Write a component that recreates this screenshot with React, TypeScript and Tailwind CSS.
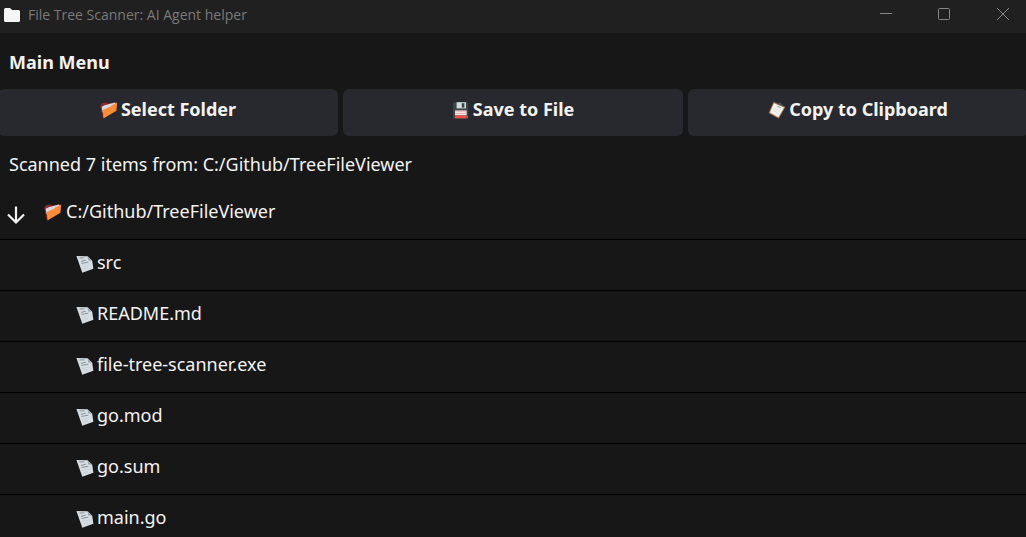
import { useState } from 'react';
import type { ReactNode } from 'react';

const files = ['src', 'README.md', 'file-tree-scanner.exe', 'go.mod', 'go.sum', 'main.go'];

function FolderIcon() {
  return (
    <svg viewBox="0 0 18 18" className="mt-0.5 size-[18px] shrink-0" aria-hidden="true">
      <path d="M0.5 4.2 2 2.3 6.8 1.6 7.6 2.4 15 1.2 14 8 2 11Z" fill="#8e2a2c" />
      <path d="M1.4 6 4.5 4.2 15.3 1.4 15.8 3.5 5 9.5 2.5 12Z" fill="#d5dbe0" />
      <path d="M1 5.2 2 7.8 3.2 16 2.5 15.6 0.4 5Z" fill="#8e2a2c" />
      <path d="M2.8 9 10.5 5.6 11.2 4.4 17.2 1.6 16.4 9.8 3.4 17.6Z" fill="#ff8c35" />
    </svg>
  );
}

function FileIcon() {
  return (
    <svg viewBox="0 0 18 18" className="mt-1 size-[18px] shrink-0" aria-hidden="true">
      <path d="M0.4 1 11.6 1.2 16.2 5.8 17.4 13.8 6.3 17.8Z" fill="#d5dde2" />
      <path d="M11.6 1.2 16.2 5.8 12.2 5.4Z" fill="#9aa8b0" />
      <path d="M3.4 3 8.4 2.8M5 6.4 9.8 5.2M5.4 8.4 12.4 7.2" stroke="#74818a" strokeWidth="0.8" fill="none" />
      <path d="M6.2 11.6 13.6 10M6.8 14 12 12.8" stroke="#c0cbd1" strokeWidth="0.6" fill="none" />
    </svg>
  );
}

function SaveIcon() {
  return (
    <svg viewBox="0 0 18 18" className="mt-0.5 size-[18px] shrink-0" aria-hidden="true">
      <path d="M1 2.2 2 1.2H15.2L16.2 2.2V17.4H1Z" fill="#37474b" />
      <path d="M4.6 1.2H14V7.4H4.6Z" fill="#d3dadd" />
      <path d="M9.8 2.2H12.4V6.6H9.8Z" fill="#37474b" />
      <path d="M3 9.6H14.6V14.4H3Z" fill="#f4e4e2" />
      <path d="M3 9.6H14.6V10.6H3ZM3 12H14.6V12.7H3Z" fill="#e9a39d" />
      <path d="M3 14.4H14.6V17.4H3Z" fill="#ee5347" />
      <path d="M15 15.4H16V16.4H15Z" fill="#a9b4b8" />
    </svg>
  );
}

function ClipboardIcon() {
  return (
    <svg viewBox="0 0 18 18" className="mt-0.5 size-[18px] shrink-0" aria-hidden="true">
      <path d="M5.6 0.8 17.4 6 10.8 17.6 0.6 12Z" fill="#b77952" />
      <path d="M6 2.2 16 6.6 10.3 16.2 2 11.6Z" fill="#f5f5f2" />
      <path d="M8.8 1.2 10.4 2.2 12 1.6 15.2 4.2 14.6 5.2 8.2 2.6Z" fill="#46535a" />
      <path d="M7.6 5.4 13 8M6.4 7.6 11.8 10.2M5.2 9.6 10.6 12.4" stroke="#c6cfd0" strokeWidth="0.7" fill="none" />
      <path d="M9.6 5.2 12.6 6.7" stroke="#6faa65" strokeWidth="0.8" fill="none" />
    </svg>
  );
}

function ActionButton({ icon, label }: { icon: ReactNode; label: string }) {
  return (
    <button
      type="button"
      className="flex h-[47px] flex-1 items-center justify-center gap-[3px] rounded-md bg-[#28292e] pb-2 font-bold hover:bg-[#323339]"
    >
      {icon}
      <span>{label}</span>
    </button>
  );
}

export default function App() {
  const [open, setOpen] = useState(true);

  return (
    <div className="min-h-screen overflow-x-hidden bg-[#171718] font-['Noto_Sans',sans-serif] text-[18px] leading-6 text-[#f3f3f3]">
      <header className="flex h-[33px] items-start justify-between bg-[#202020] text-[#858585]">
        <div className="flex h-[30px] items-center gap-2 pl-1">
          <svg viewBox="0 0 16 14" className="h-3.5 w-4" aria-hidden="true">
            <path d="M0 1.5Q0 0 1.5 0H6L8 2H14.5Q16 2 16 3.5V12.5Q16 14 14.5 14H1.5Q0 14 0 12.5Z" fill="#f5f5f5" />
          </svg>
          <h1 className="font-['Open_Sans',sans-serif] text-[14px] leading-5 text-[#7a7a7a]">File Tree Scanner: AI Agent helper</h1>
        </div>
        <div className="flex">
          <button type="button" aria-label="Minimize" className="flex h-7 w-[58px] items-center justify-center">
            <svg viewBox="0 0 12 12" className="size-3" aria-hidden="true">
              <path d="M0 5.5H12" stroke="currentColor" />
            </svg>
          </button>
          <button type="button" aria-label="Maximize" className="flex h-7 w-[58px] items-center justify-center">
            <svg viewBox="0 0 12 12" className="size-3" fill="none" aria-hidden="true">
              <rect x="0.5" y="0.5" width="11" height="11" rx="1" stroke="currentColor" />
            </svg>
          </button>
          <button type="button" aria-label="Close" className="flex h-7 w-[53px] items-center justify-center pl-1.5">
            <svg viewBox="0 0 12 12" className="size-3" fill="none" aria-hidden="true">
              <path d="M0 0 12 12M12 0 0 12" stroke="currentColor" />
            </svg>
          </button>
        </div>
      </header>

      <main>
        <h2 className="px-[9px] pt-[17px] pb-[15px] font-bold">Main Menu</h2>
        <div className="-mx-0.5 flex gap-[5px]">
          <ActionButton icon={<FolderIcon />} label="Select Folder" />
          <ActionButton icon={<SaveIcon />} label="Save to File" />
          <ActionButton icon={<ClipboardIcon />} label="Copy to Clipboard" />
        </div>
        <p className="px-[9px] pt-4 pb-3">Scanned 7 items from: C:/Github/TreeFileViewer</p>

        <ul>
          <li>
            <div className="flex h-[51px] items-center pb-1.5 pl-1">
              <button
                type="button"
                aria-label="Toggle folder"
                aria-expanded={open}
                onClick={() => setOpen(!open)}
                className="mr-4 flex size-6 items-center justify-center pt-2"
              >
                <svg viewBox="0 0 24 24" className={open ? 'size-6 shrink-0' : 'size-6 shrink-0 -rotate-90'} fill="none" aria-hidden="true">
                  <path d="M12 3.5V19M4 11.5 12 19.5 20 11.5" stroke="#f3f3f3" strokeWidth="2.2" />
                </svg>
              </button>
              <FolderIcon />
              <span className="pl-1">C:/Github/TreeFileViewer</span>
            </div>
            {open && (
              <ul>
                {files.map((name) => (
                  <li key={name} className="flex h-[51px] items-center border-t border-black pb-1.5 pl-[76px]">
                    <FileIcon />
                    <span className="pl-[3px]">{name}</span>
                  </li>
                ))}
              </ul>
            )}
          </li>
        </ul>
      </main>
    </div>
  );
}
